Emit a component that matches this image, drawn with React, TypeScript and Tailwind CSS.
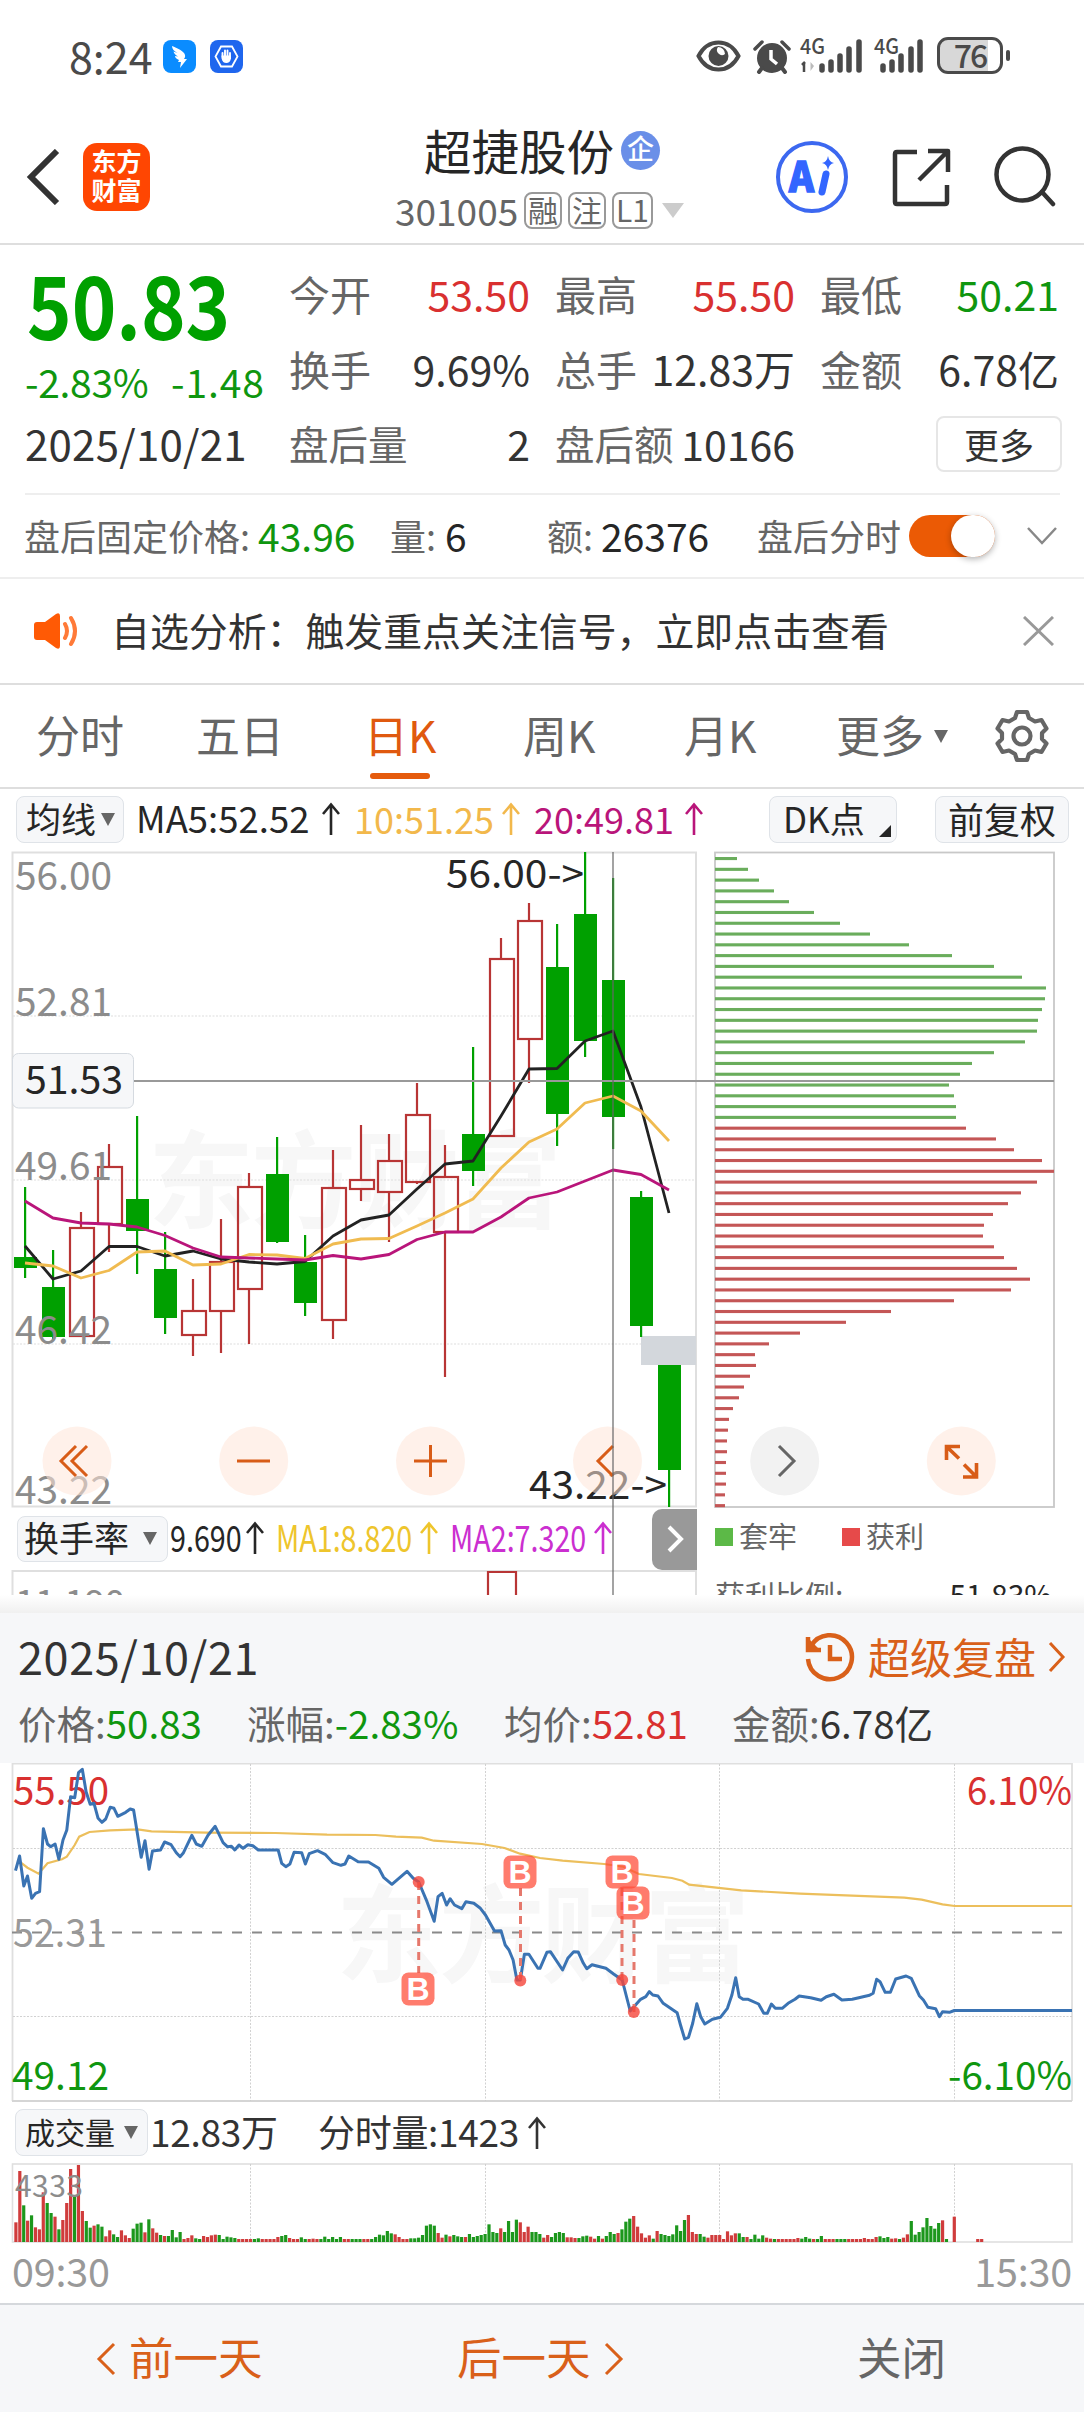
import { FC, ReactNode } from "react";

type Candle = [high: number, top: number, bottom: number, low: number, up: boolean];

// y values of every candle, left to right
const candles: Candle[] = [
  [1187, 1257, 1268, 1278, false],
  [1250, 1287, 1337, 1339, false],
  [1212, 1228, 1336, 1336, true],
  [1144, 1167, 1224, 1252, true],
  [1116, 1199, 1231, 1274, false],
  [1232, 1269, 1318, 1334, false],
  [1279, 1311, 1335, 1356, true],
  [1219, 1262, 1311, 1353, true],
  [1173, 1187, 1289, 1344, true],
  [1137, 1174, 1242, 1243, false],
  [1235, 1262, 1303, 1316, false],
  [1150, 1188, 1320, 1339, true],
  [1125, 1180, 1189, 1201, true],
  [1134, 1161, 1192, 1242, true],
  [1083, 1115, 1182, 1184, true],
  [1145, 1177, 1232, 1377, true],
  [1047, 1134, 1171, 1186, false],
  [938, 959, 1136, 1136, true],
  [903, 921, 1039, 1083, true],
  [924, 967, 1114, 1146, false],
  [852, 914, 1041, 1057, false],
  [878, 980, 1117, 1149, false],
  [1191, 1197, 1326, 1337, false],
  [1365, 1365, 1470, 1507, false],
];

const ma5 = [1246, 1279, 1271, 1246.5, 1246.5, 1256, 1251, 1259, 1262, 1264, 1261.5, 1236, 1220, 1215, 1189, 1164, 1161, 1116, 1069, 1068.5, 1041, 1031, 1107, 1213];
const ma10 = [1263, 1266, 1278, 1270.5, 1252, 1251, 1265, 1264, 1254.5, 1255, 1258.5, 1244, 1239, 1238.5, 1226, 1213, 1199, 1168, 1142, 1129, 1103, 1096, 1111, 1141];
const ma20 = [1201, 1218, 1223, 1224, 1227, 1235.5, 1248, 1257, 1258, 1259, 1260, 1255.5, 1259, 1254.5, 1239.5, 1232, 1232, 1217, 1198, 1192, 1181, 1170, 1174.5, 1190];

// chip distribution, bar lengths
const trapped = [22, 33, 44, 59, 74, 99, 125, 155, 194, 237, 279, 307, 331, 330, 327, 323, 322, 310, 279, 257, 245, 234, 239, 241, 241];
const profit = [
  251, 281, 299, 327, 339, 322, 306, 293, 278, 269, 268, 279, 289, 302, 315, 296, 239, 176, 131, 85, 54, 40, 41, 35, 29, 24, 18, 14, 13, 12, 12, 11,
  11, 11, 10, 10,
];

const priceLine =
  "15.5,1870.7 19.6,1856 23.8,1886 27.5,1876 31.7,1898.3 35.5,1893.3 39.6,1891.7 43.4,1828.7 47.5,1844 50.6,1846.7 55.1,1844 58.9,1859.3 63,1840 66.8,1830 70.6,1796.7 74.7,1797.7 78.5,1772.7 82.3,1769.3 86.1,1791.7 90.2,1804.3 94,1803.3 98.1,1818.3 101.9,1822.3 105.7,1819 110.2,1807.3 114,1808.3 117.8,1816.3 125.7,1812.3 130.2,1809 133.6,1810 141.2,1857.3 145,1840.7 149.1,1869.3 152.5,1851 160.5,1850 164.6,1842 171.1,1844.7 176.3,1852.7 180.1,1856.7 183.5,1852.7 191.8,1835.3 196.3,1844 201.8,1846.3 208,1835.3 215.2,1826.3 223.1,1842.7 227.3,1846.7 231.4,1846.3 234.8,1850 239,1845 243.1,1848.3 247.9,1844.7 252.8,1845.7 258.3,1850 278.2,1850 281.7,1863.3 285.8,1866.7 289.9,1864 294.1,1852.3 301.7,1852.7 305.4,1864 309.2,1853.7 317.5,1850.7 325.1,1854.3 333,1862.7 340.9,1865.3 345,1864 348.8,1856 358.1,1861.7 368.5,1862 378.8,1868.3 383.6,1877.3 391.9,1884.3 407,1871.3 413.2,1878.3 418.7,1882 427,1901.7 434.2,1921.3 438,1896.7 442.1,1893.3 446.6,1905 450.1,1898.7 454.5,1905 461.8,1908.7 465.9,1901.7 473.8,1903.3 480.4,1908.3 485.5,1915 494.5,1931 501,1930.7 505.2,1945 509,1950 513.1,1960 516.9,1980 520.3,1980 524.4,1954.3 528.9,1954.3 537.9,1968.3 540,1968.3 546.9,1952.3 550.4,1951.7 562.6,1970 567.8,1958.3 573.7,1951.7 578.2,1952 583.4,1963.3 586.8,1968.7 592,1964.7 605.9,1968.3 613.6,1974 622.2,1980 630.2,2011 640.6,1999.3 645.8,1996.7 649.3,1991.7 652.8,1995 658,1996 663.2,2003.3 677.1,2012.7 680.5,2025 684.7,2039 688.5,2037.3 692.7,2023.3 696.8,2003.7 700.7,2016.7 704.8,2024 712.4,2019.3 720.4,2017.3 727.4,2008.3 731.9,1995 735.7,1977.7 739.2,1996.7 743,1999.3 748.2,1999.3 758.6,2004 763.8,2013.3 767.3,2013.3 771.4,2004 775.3,2008.3 782.2,2008.3 788.1,2003.3 795,1999.3 799.2,1996 810.6,1997.7 821.1,2000.3 826.3,1996.7 833.9,1994.3 841.9,2000 852.3,1999.3 869.6,1995.3 873.1,1993.3 876.6,1979.3 880,1981.7 885.2,1992.3 890.4,1992.3 895.7,1979 906.1,1976 911.3,1978.3 919.3,1995.7 923.4,2000 927.9,2007.3 935.6,2008.7 939.4,2016.7 942.5,2011.7 949.4,2012.3 954.3,2010.5 1072,2010.5";

const averageLine =
  "19.6,1861.7 27.5,1867.7 38.6,1873.7 47.5,1863.3 62,1859.3 66.8,1856.7 74.7,1845 79.2,1836.7 89.5,1832 110,1830.3 137.7,1829.3 151.5,1831.3 206.6,1832.7 275.5,1833 327,1834.7 375.3,1835 396,1836.7 421.8,1837.7 433.9,1840.7 482,1844 504.5,1848 520,1853.7 540,1858 562.6,1860.7 604.2,1864 623.3,1866.7 638.9,1874 671.9,1878 682.3,1880.7 689.2,1884.7 741.2,1890.3 800,1893.7 904.3,1897.7 921.7,1899.7 942.5,1904.3 954.7,1906 1072,1906";

// volume per minute, negative = sell side
const volumes = [
  59, 213, -110, 64, -80, 44, 38, 149, -117, -87, 76, -38, 66, 117, 219, -136, 231, 93, -63, -43, 49, -53, -46, 17, 35, -23, -15, 35, 20, 12, -40, -55,
  -58, 29, -68, 41, 28, -21, 18, -18, -36, -14, -30, 9, 12, 20, -11, -9, 18, 15, 20, 22, -21, -9, -16, -14, -12, 9, 9, 9, 9, -9, -11, 9, 9, 9, 9, 15,
  -18, -21, 12, 9, 9, -14, -9, 9, 10, 9, -9, -16, -9, -15, -9, -15, 9, 9, -9, -9, -9, 9, 9, -9, -15, -22, -20, -33, -26, 23, 15, 9, 9, -11, -11, -13,
  -21, -49, -53, -49, 27, 13, -22, 17, -21, -17, -15, 15, -24, -15, -18, -21, -24, -53, -30, -27, 41, -30, -63, -30, -67, 59, 30, 46, -30, -30, -24,
  13, 21, -15, -27, -30, -27, 14, 14, 12, -12, -17, -19, 16, 10, -18, 10, -18, -30, -24, 27, -38, -61, -70, 78, 46, 26, 13, 20, -10, 33, -24, -21, -18,
  -23, -50, -33, -66, 81, 30, 24, -24, -16, 13, 21, 21, 21, 9, 32, 20, 26, -26, -15, 15, -9, -22, -10, -20, 13, 10, -9, 9, 9, 9, 9, 9, 12, -10, -15,
  -10, 9, -9, -18, 9, 9, 9, -9, -9, -9, 9, 9, 9, 9, 12, 9, 9, 15, -17, -12, -15, 10, 11, -9, 13, 23, -63, -22, -30, -44, -72, -48, -40, -57, 65, -9, 0,
  76, 0, 0, 0, 0, 0, 9, 9,
];

const RED = "#d93030";
const GREEN = "#0f960f";

const toPoints = (values: number[]) => values.map((y, i) => `${25 + i * 28},${y}`).join(" ");

const UpArrow: FC<{ className?: string }> = ({ className }) => (
  <svg className={className} width="20" height="34" viewBox="0 0 20 34" fill="none" stroke="currentColor" strokeWidth="2.6">
    <path d="M10 33V3M2 12l8-9.500 8 9.500" />
  </svg>
);

const Caret: FC<{ className?: string }> = ({ className }) => (
  <svg className={className} width="14" height="13" viewBox="0 0 14 13" fill="currentColor">
    <path d="M0 0h14L7 13z" />
  </svg>
);

// condensed indicator text
const Narrow: FC<{ text: string; className: string }> = ({ text, className }) => (
  <span className={`block overflow-visible whitespace-nowrap pb-[5px] ${className}`}>
    <span className="inline-block origin-left scale-x-[0.775]">{text}</span>
  </span>
);

const StatusBar = () => (
  <div className="h-[112px] pt-[37px] pl-[69px] flex items-start text-[#4a4a4a]">
    <div className="text-[43px] leading-[36px] w-[94px]">8:24</div>
    <svg className="mt-[3px]" width="33" height="33" viewBox="0 0 33 33">
      <rect width="33" height="33" rx="8" fill="#0a8cff" />
      <path d="M9 6c5 2 12 5 13 9 .5 2-.5 3-1 4h3l-7 9 1-6h-3l1-2c-3-1-4-3-4-4l3 .5c-3-2-4-3-4.500-5l4 1.500C11 11 9 9 9 6z" fill="#fff" />
    </svg>
    <svg className="mt-[3px] ml-[14px]" width="33" height="33" viewBox="0 0 33 33">
      <rect width="33" height="33" rx="8" fill="#1f66ee" />
      <path d="M11 6.500h11l5.500 10L22 26.500H11L5.500 16.500z" fill="none" stroke="#fff" strokeWidth="1.800" />
      <path d="M12.500 17v-4M15 16v-5.500M17.500 16v-5.500M20 17v-4" stroke="#fff" strokeWidth="1.900" strokeLinecap="round" />
      <path d="M11.600 15.500h9.400v3q-1 4.500-4.700 4.500t-4.700-4.500z" fill="#fff" />
    </svg>
    <svg className="ml-[453px] mt-[2px]" width="45" height="34" viewBox="0 0 45 34">
      <path d="M2.500 17C12-1 33-1 42.500 17 33 35 12 35 2.500 17z" fill="none" stroke="currentColor" strokeWidth="4" />
      <circle cx="22.500" cy="17" r="10" fill="currentColor" />
      <path d="M22 8a5 5 0 0 0 7 7a7 7 0 0 0-7-7z" fill="#fff" />
    </svg>
    <svg className="ml-[12px] mt-[3px]" width="38" height="34" viewBox="0 0 38 34">
      <circle cx="19" cy="18" r="15" fill="currentColor" />
      <path d="M2 9l7-7M36 9l-7-7" stroke="currentColor" strokeWidth="3.500" strokeLinecap="round" />
      <path d="M9 28l-3 4M29 28l3 4" stroke="currentColor" strokeWidth="4" strokeLinecap="round" />
      <path d="M18 10v9l6 5" stroke="#fff" strokeWidth="3.500" fill="none" />
    </svg>
    <svg className="ml-[9px] overflow-visible" width="66" height="37" viewBox="0 0 66 37">
      <text x="0" y="17" fontSize="21" fontWeight="500" fill="currentColor" textLength="25" lengthAdjust="spacingAndGlyphs">4G</text>
      <path d="M4 25v10M2 28l3-3" stroke="currentColor" strokeWidth="2.500" />
      <path d="M10.500 25v9l3.500-5z" fill="#bbb" />
      <g stroke="currentColor" strokeWidth="5.500" strokeLinecap="round">
        <path d="M22 29v4M31 25v8M40 19v14M49 12v21M59 5v28" />
      </g>
    </svg>
    <svg className="ml-[8px] overflow-visible" width="54" height="37" viewBox="0 0 54 37">
      <text x="0" y="17" fontSize="21" fontWeight="500" fill="currentColor" textLength="25" lengthAdjust="spacingAndGlyphs">4G</text>
      <g stroke="currentColor" strokeWidth="5.500" strokeLinecap="round">
        <path d="M9 29v4M18 25v8M27 19v14M37 12v21M46 5v28" />
      </g>
    </svg>
    <div className="ml-[9px] w-[66px] h-[37px] rounded-[11px] border-[3px] border-[#4a4a4a] bg-[linear-gradient(90deg,#d8d8d8_80%,#fff_80%)] text-[32px] leading-[28px] text-center font-medium tracking-[-2px]">76</div>
    <div className="ml-[3px] mt-[13px] w-[4px] h-[11px] rounded-full bg-[#4a4a4a]" />
  </div>
);

const Tag: FC<{ children: ReactNode }> = ({ children }) => (
  <span className="h-[37px] min-w-[37px] px-[2px] rounded-[8px] border-2 border-[#999] text-[30px] leading-[31px] text-center text-[#666]">{children}</span>
);

const Header = () => (
  <div className="h-[133px] border-b-2 border-[#dedede] flex pl-[26px]">
    <svg className="mt-[37px]" width="34" height="56" viewBox="0 0 34 56" fill="none" stroke="#333" strokeWidth="6">
      <path d="M31 2L5 28l26 26" />
    </svg>
    <div className="mt-[31px] ml-[23px] w-[67px] h-[68px] rounded-[14px] bg-[#ff4602] text-white text-[25px] leading-[29px] font-bold text-center pt-[3px]">
      <div>东方</div>
      <div>财富</div>
    </div>
    <div className="ml-[244px] w-[301px] pt-[10px]">
      <div className="flex items-center pl-[30px]">
        <h1 className="text-[47.500px] leading-[56px] text-[#262626]">超捷股份</h1>
        <span className="ml-[7px] w-[39px] h-[39px] rounded-full bg-[#6a8fe8] text-white text-[27px] leading-[34px] font-medium text-center">企</span>
      </div>
      <div className="flex items-center mt-[12px] text-[37px] leading-[36px] text-[#666]">
        <span className="w-[130px] pl-[1px]">301005</span>
        <span className="flex gap-[6px] pt-[2px]">
          <Tag>融</Tag>
          <Tag>注</Tag>
          <Tag>L1</Tag>
        </span>
        <svg className="ml-[9px] mt-[2px]" width="22" height="15" viewBox="0 0 22 15"><path d="M0 0h22L11 15z" fill="#ccc" /></svg>
      </div>
    </div>
    <svg className="mt-[28px] ml-[80px]" width="74" height="74" viewBox="0 0 74 74">
      <circle cx="37" cy="37" r="34" fill="none" stroke="#3c68f0" strokeWidth="4" />
      <text x="14" y="52" fontSize="42" fontWeight="900" fill="#3366ff" stroke="#3366ff" strokeWidth="1.500" textLength="25" lengthAdjust="spacingAndGlyphs">A</text>
      <path d="M51 34l-4 18" stroke="#3366ff" strokeWidth="7" strokeLinecap="round" />
      <path d="M53 16q1 6 6 7-5 1-6 7-1-6-6-7 5-1 6-7z" fill="#3366ff" />
    </svg>
    <svg className="mt-[36px] ml-[43px]" width="60" height="60" viewBox="0 0 60 60" fill="none" stroke="#333" strokeWidth="4.500" strokeLinejoin="round">
      <path d="M25 4H5q-2 0-2 2v48q0 2 2 2h48q2 0 2-2V37" />
      <path d="M36 3h20v21M55 4L27 32" />
    </svg>
    <svg className="mt-[34px] ml-[42px]" width="62" height="62" viewBox="0 0 62 62" fill="none" stroke="#333" strokeWidth="4.500" strokeLinecap="round">
      <circle cx="28.500" cy="28.500" r="26" />
      <path d="M48 46l11 12" />
    </svg>
  </div>
);

const Stat: FC<{ label: string; value: string; tone?: string }> = ({ label, value, tone = "text-[#333]" }) => (
  <div className="flex justify-between whitespace-nowrap">
    <span className="text-[#666]">{label}</span>
    <span className={tone}>{value}</span>
  </div>
);

const Quote = () => (
  <div className="relative h-[334px] pl-[25px] border-b-2 border-[#eee]">
    <div className="flex h-[248px] pt-[12px]">
      <div className="w-[264px] shrink-0">
        <div className="text-[87px] leading-[88px] mt-[1px] pl-[2px] font-bold text-[#00a000]"><span className="inline-block origin-left scale-x-[0.87]">50.83</span></div>
        <div className="flex text-[39px] leading-[48px] mt-[11px] text-[#0f960f]">
          <span className="w-[146px] tracking-[-0.3px]">-2.83%</span>
          <span className="tracking-[0.9px]">-1.48</span>
        </div>
        <div className="text-[42px] leading-[50px] mt-[13px] text-[#333] tracking-[0.25px]">2025/10/21</div>
      </div>
      <div className="grid grid-cols-[241px_240px_239px] gap-x-[25px] auto-rows-[75px] leading-[72px] text-[41px]">
        <Stat label="今开" value="53.50" tone="text-[#d93030]" />
        <Stat label="最高" value="55.50" tone="text-[#d93030]" />
        <Stat label="最低" value="50.21" tone="text-[#0f960f]" />
        <Stat label="换手" value="9.69%" />
        <Stat label="总手" value="12.83万" />
        <Stat label="金额" value="6.78亿" />
        <div className="flex justify-between">
          <span className="text-[39.500px] text-[#666]">盘后量</span>
          <span className="text-[#333]">2</span>
        </div>
        <div className="flex justify-between">
          <span className="text-[39.500px] text-[#666]">盘后额</span>
          <span className="text-[#333]">10166</span>
        </div>
        <button className="mt-[9px] -mr-[3px] ml-auto w-[126px] h-[56px] rounded-[8px] border-2 border-[#e6e6e6] text-[35px] leading-[46px] text-[#333]">更多</button>
      </div>
    </div>
    <div className="mr-[24px] flex items-center h-[84px] border-t-2 border-[#eee] text-[36px] text-[#666] whitespace-nowrap">
      <span className="w-[234px] -ml-[1px] pb-[2px]">盘后固定价格:</span>
      <span className="w-[132px] text-[39px] pb-[2px] text-[#0f960f]">43.96</span>
      <span className="w-[55px] pb-[2px]">量:</span>
      <span className="w-[102px] text-[39px] pb-[2px] text-[#262626]">6</span>
      <span className="w-[54px] pb-[2px]">额:</span>
      <span className="w-[156px] text-[39px] pb-[2px] text-[#262626]">26376</span>
      <span className="w-[152px] pb-[2px]">盘后分时</span>
      <span className="w-[86px] h-[42px] rounded-full bg-[#eb5a05] flex justify-end">
        <span className="w-[44px] h-[42px] rounded-full bg-white shadow-[0_2px_6px_rgba(0,0,0,0.3)]" />
      </span>
      <svg className="ml-[32px]" width="30" height="18" viewBox="0 0 30 18" fill="none" stroke="#888" strokeWidth="2.500"><path d="M1 1l14 15L29 1" /></svg>
    </div>
  </div>
);

const Notice = () => (
  <div className="flex items-center h-[106px] border-b-2 border-[#dedede] pl-[33px] text-[38.900px] text-[#333]">
    <svg width="46" height="36" viewBox="0 0 46 36" fill="#ff5a05">
      <path d="M4 9h8L23 1q4-2 4 2v30q0 4-4 2l-11-8H4q-3 0-3-3V12q0-3 3-3z" />
      <path d="M32 11q4 7 0 14M38 5q8 13 0 26" fill="none" stroke="#ff7a38" strokeWidth="4" strokeLinecap="round" />
    </svg>
    <span className="ml-[32px] w-[912px] pb-[4px]">自选分析：触发重点关注信号，立即点击查看</span>
    <svg width="31" height="30" viewBox="0 0 31 30" stroke="#999" strokeWidth="3"><path d="M1 1l29 28M30 1L1 29" /></svg>
  </div>
);

const tabs = [
  { name: "分时", width: "w-[160px]" },
  { name: "五日", width: "w-[168px]" },
  { name: "日K", width: "w-[159px]" },
  { name: "周K", width: "w-[161px]" },
  { name: "月K", width: "w-[152px]" },
  { name: "更多", width: "w-[98px]" },
];

const Tabs = () => (
  <div className="flex items-center h-[104px] border-b-2 border-[#dedede] pl-[36px] text-[44px] text-[#666]">
    {tabs.map((tab) => (
      <div key={tab.name} className={`relative h-full leading-[98px] whitespace-nowrap ${tab.width} ${tab.name === "日K" ? "text-[#e0590f]" : ""}`}>
        {tab.name}
        {tab.name === "日K" && <span className="absolute left-[6px] bottom-[8px] w-[60px] h-[6px] rounded-full bg-[#e55b0d]" />}
      </div>
    ))}
    <Caret />
    <svg className="ml-[47px]" width="54" height="54" viewBox="0 0 54 54" fill="none" stroke="#666" strokeWidth="4.200" strokeLinejoin="round">
      <path d="M22 3h10l2 6 6 3.500 6.500-1.500 5 8.500-4.500 4.500v6l4.500 4.500-5 8.500-6.500-1.500-6 3.500-2 6H22l-2-6-6-3.500L7.500 43l-5-8.500L7 30v-6l-4.500-4.500 5-8.500L14 12.500 20 9z" />
      <circle cx="27" cy="27" r="8.500" />
    </svg>
  </div>
);

const KToolbar = () => (
  <div className="flex items-center h-[62px] pl-[16px] pr-[15px] text-[37px] text-[#262626] whitespace-nowrap">
    <button className="w-[108px] h-[47px] flex items-center pl-[9px] pb-[3px] rounded-[8px] border border-[#dfe3e8] bg-[#f6f7f9] text-[35px]">
      均线<Caret className="ml-[5px] mt-[4px] text-[#666]" />
    </button>
    <span className="ml-[12px] w-[184px] pb-[2px] text-[36.500px]">MA5:52.52</span>
    <UpArrow className="ml-[1px]" />
    <span className="ml-[13px] w-[147px] pb-[2px] text-[36px]  text-[#f2b84b]">10:51.25</span>
    <UpArrow className="text-[#f2b84b]" />
    <span className="ml-[13px] w-[150px] pb-[2px] text-[36px] text-[#b9157a]">20:49.81</span>
    <UpArrow className="text-[#b9157a]" />
    <button className="relative ml-auto w-[128px] h-[47px] pb-[3px] rounded-[8px] border border-[#dfe3e8] bg-[#f6f7f9] text-[35px] leading-[40px] text-left pl-[13px]">
      DK点
      <svg className="absolute right-[5px] bottom-[5px]" width="12" height="12" viewBox="0 0 12 12"><path d="M12 0v12H0z" fill="#262626" /></svg>
    </button>
    <button className="ml-[38px] w-[134px] h-[47px] pb-[3px] rounded-[8px] border border-[#dfe3e8] bg-[#f6f7f9] text-[36px] leading-[40px]">前复权</button>
  </div>
);

const Watermark: FC<{ x: number; y: number }> = ({ x, y }) => (
  <text x={x} y={y} fontSize="106" fontWeight="700" fill="#f7f7f7" textLength="414">东方财富</text>
);

const AxisText: FC<{ x: number; y: number; w: number; fill: string; children: ReactNode }> = ({ x, y, w, fill, children }) => (
  <text x={x} y={y} fontSize="39" fill={fill} textLength={w} lengthAdjust="spacingAndGlyphs">{children}</text>
);

const KChart = () => (
  <svg className="block" width="1084" height="658" viewBox="0 850 1084 658">
    <rect x="12.500" y="852.500" width="683.500" height="654" fill="none" stroke="#dfdfdf" strokeWidth="2" />
    <Watermark x={148} y={1220} />
    <path d="M13 1016h683M13 1180h683M13 1344h683" stroke="#ddd" strokeDasharray="2 1.500" />
    <rect x="641" y="1336" width="55" height="29" fill="#d3d7dc" />
    {candles.map(([high, top, bottom, low, up], i) => {
      const x = 25 + i * 28;
      return up ? (
        <g key={i} stroke="#b83535" strokeWidth="2.200" fill="none">
          <path d={`M${x} ${high}V${top}M${x} ${bottom}V${low}`} />
          <rect x={x - 11} y={top} width="24" height={bottom - top} />
        </g>
      ) : (
        <g key={i} fill="#00a000">
          <rect x={x - 1} y={high} width="2.200" height={low - high} />
          <rect x={x - 11} y={top} width="23" height={bottom - top} />
        </g>
      );
    })}
    <g fill="none" strokeWidth="2.800" strokeLinejoin="round">
      <polyline points={toPoints(ma5)} stroke="#222" />
      <polyline points={toPoints(ma10)} stroke="#f0bb50" />
      <polyline points={toPoints(ma20)} stroke="#b9157a" />
    </g>
    <AxisText x={15} y={890} w={97} fill="#8c8c8c">56.00</AxisText>
    <AxisText x={15} y={1016} w={97} fill="#8c8c8c">52.81</AxisText>
    <AxisText x={15} y={1180} w={97} fill="#8c8c8c">49.61</AxisText>
    <AxisText x={15} y={1344} w={97} fill="#8c8c8c">46.42</AxisText>
    <AxisText x={15} y={1504} w={97} fill="#8c8c8c">43.22</AxisText>
    <AxisText x={446} y={888} w={138} fill="#262626">56.00-&gt;</AxisText>
    <AxisText x={529} y={1499} w={138} fill="#262626">43.22-&gt;</AxisText>

    {/* chip distribution */}
    <rect x="715" y="852.500" width="339" height="654.500" fill="none" stroke="#c8c8c8" strokeWidth="1.800" />
    {[...trapped, ...profit].map((w, i) => (
      <rect key={i} x="715" y={857 + i * 10.785} width={w} height="3.100" fill={i < trapped.length ? "#6aad5c" : "#c45656"} />
    ))}

    <path d="M13 1081H1054" stroke="#999" strokeWidth="1.800" />
    <rect x="12.500" y="1053.500" width="121" height="54.500" rx="6" fill="#f6f7f9" stroke="#d5dae0" />
    <AxisText x={25} y={1094} w={98} fill="#262626">51.53</AxisText>

    {/* floating controls */}
    <g fill="#ffe5d9" fillOpacity="0.550">
      <circle cx="77" cy="1461" r="34.500" />
      <circle cx="253.700" cy="1461" r="34.500" />
      <circle cx="430.500" cy="1461" r="34.500" />
      <circle cx="607.500" cy="1461" r="34.500" />
      <circle cx="961.300" cy="1461" r="34.500" />
    </g>
    <circle cx="784.700" cy="1461" r="34.500" fill="#f2f2f2" />
    <g fill="none" stroke="#d85c17" strokeWidth="3">
      <path d="M76 1446l-15 15 15 15M87 1446l-15 15 15 15" />
      <path d="M237 1461h33M414 1461h33M430.500 1445v32" />
      <path d="M613 1446l-15 15 15 15" />
      <path d="M960 1446.500h-13.500v13.500M947 1447l12 11.500M963 1477h13.500v-14M976 1476.500l-12-12" strokeWidth="3.600" />
    </g>
    <path d="M779 1446l15 15-15 15" fill="none" stroke="#666" strokeWidth="3" />
  </svg>
);

const Turnover = () => (
  <div className="flex h-[87px] overflow-hidden">
    <div className="w-[697px]">
      <div className="flex items-center h-[62px] pl-[17px] text-[37px] text-[#262626]">
        <button className="w-[151px] h-[46px] flex items-center pl-[6px] pb-[5px] rounded-[8px] border border-[#dfe3e8] bg-[#f6f7f9] text-[35px] whitespace-nowrap">
          换手率<Caret className="ml-[14px] mt-[4px] text-[#666]" />
        </button>
        <Narrow text="9.690" className="ml-[2px] w-[75px]" />
        <UpArrow className="mb-[3px]" />
        <Narrow text="MA1:8.820" className="ml-[11px] w-[143px] text-[#eec52c]" />
        <UpArrow className="mb-[3px] text-[#eec52c]" />
        <Narrow text="MA2:7.320" className="ml-[11px] w-[143px] text-[#cb2fd0]" />
        <UpArrow className="mb-[3px] text-[#cb2fd0]" />
        <div className="ml-auto w-[45px] h-[61px] rounded-l-[10px] bg-[#999] flex items-center justify-center">
          <svg width="18" height="28" viewBox="0 0 18 28" fill="none" stroke="#fff" strokeWidth="4"><path d="M3 2l12 12L3 26" /></svg>
        </div>
      </div>
      <svg className="block" width="697" height="25" viewBox="0 1570 697 25">
        <path d="M12.500 1595v-24H696v24" fill="none" stroke="#dfdfdf" strokeWidth="2" />
        <path d="M488 1595v-23h28v23" fill="none" stroke="#b83535" strokeWidth="2.200" />
        <text x="15" y="1616" fontSize="37" fill="#8c8c8c" textLength="110">11.190</text>
      </svg>
    </div>
    <div className="flex-1 pl-[18px] text-[29px] text-[#666]">
      <div className="flex items-center h-[58px]">
        <span className="w-[18px] h-[18px] bg-[#5cb947]" />
        <span className="ml-[6px] w-[103px] pb-[3px]">套牢</span>
        <span className="w-[18px] h-[18px] bg-[#e64a4a]" />
        <span className="ml-[6px] pb-[3px]">获利</span>
      </div>
      <div className="flex justify-between pr-[32px] pt-[6px] text-[30px] leading-[44px]">
        <span>获利比例:</span>
        <span className="text-[#262626]">51.83%</span>
      </div>
    </div>
  </div>
);

const ReviewHeader = () => (
  <div>
    <div className="h-[18px] bg-linear-to-b from-white to-[#f0f0f0]" />
    <div className="h-[150px] bg-[#f6f7f9] text-[#333]">
      <div className="flex items-center h-[88px] pl-[18px] pr-[18px]">
        <span className="text-[45px] tracking-[0.6px] pb-[4px]">2025/10/21</span>
        <svg className="ml-auto" width="50" height="50" viewBox="0 0 50 50" fill="none" stroke="#d9601a" strokeWidth="4.500">
          <path d="M6 14a22 22 0 1 1-3 13" />
          <path d="M3 5v13h13" />
          <path d="M5 8v10h10z" fill="#d9601a" stroke="none" />
          <path d="M25 13v14h12" />
        </svg>
        <span className="ml-[13px] text-[42px] pb-[3px] text-[#d9601a]">超级复盘</span>
        <svg className="ml-[12px]" width="18" height="32" viewBox="0 0 18 32" fill="none" stroke="#d9601a" strokeWidth="3"><path d="M2 2l13 14L2 30" /></svg>
      </div>
      <div className="flex items-center h-[42px] pl-[18px] text-[38.500px] text-[#666] whitespace-nowrap">
        <span className="w-[229px]">价格:<span className="text-[#0f960f]">50.83</span></span>
        <span className="w-[257px]">涨幅:<span className="text-[#0f960f]">-2.83%</span></span>
        <span className="w-[228px]">均价:<span className="text-[#d93030]">52.81</span></span>
        <span>金额:<span className="text-[#333]">6.78亿</span></span>
      </div>
    </div>
  </div>
);

const Signal: FC<{ x: number; y: number }> = ({ x, y }) => (
  <g>
    <rect x={x} y={y} width="33" height="33" rx="7" fill="#ff4a35" fillOpacity="0.720" />
    <text x={x + 16.5} y={y + 27.5} fontSize="32" fontWeight="700" fill="#fff" textAnchor="middle" fontFamily="Liberation Sans">B</text>
  </g>
);

const MinuteChart = () => (
  <svg className="block" width="1084" height="339" viewBox="0 1763 1084 339">
    <path d="M12.500 2101V1763.500H1072V2101" fill="none" stroke="#dfdfdf" strokeWidth="1.800" />
    <path d="M12 2101H1072" stroke="#d5d5d5" strokeWidth="2" />
    <Watermark x={336} y={1974} />
    <path d="M250.500 1764v337M485.500 1764v337M719.500 1764v337M954.500 1764v337M13 1848.500H1072M13 2016.500H1072" stroke="#ccc" strokeDasharray="2 1.500" strokeWidth="0.900" />
    <path d="M12 1932.500H1062" stroke="#8a8a8a" strokeWidth="1.800" strokeDasharray="10 10" />
    <AxisText x={13} y={1805} w={96} fill={RED}>55.50</AxisText>
    <AxisText x={13} y={1947} w={94} fill="#999">52.31</AxisText>
    <AxisText x={12} y={2090} w={97} fill={GREEN}>49.12</AxisText>
    <AxisText x={967} y={1805} w={105} fill={RED}>6.10%</AxisText>
    <AxisText x={948} y={2090} w={124} fill={GREEN}>-6.10%</AxisText>
    <polyline points={averageLine} fill="none" stroke="#ecbf5c" strokeWidth="2.200" />
    <polyline points={priceLine} fill="none" stroke="#3a73b3" strokeWidth="3" strokeLinejoin="round" />
    <path d="M418.700 1882v91M520.500 1980v-92M622 1980v-92M634 2012v-93" stroke="#e5786c" strokeWidth="3" strokeDasharray="8 6" />
    <g fill="#f5453a" fillOpacity="0.800">
      <circle cx="418.700" cy="1882" r="6" />
      <circle cx="520.300" cy="1980.500" r="6" />
      <circle cx="622.200" cy="1980" r="6" />
      <circle cx="633.800" cy="2012" r="6" />
    </g>
    <Signal x={401.5} y={1972.5} />
    <Signal x={503.5} y={1855.5} />
    <Signal x={605.5} y={1855.5} />
    <Signal x={616.5} y={1886.5} />
  </svg>
);

const Volume = () => (
  <div className="h-[201px]">
    <div className="flex items-center h-[61px] pl-[15px] text-[37px] text-[#333] whitespace-nowrap">
      <button className="w-[133px] h-[47px] flex items-center pl-[9px] pb-[4px] rounded-[8px] border border-[#dfe3e8] bg-[#f6f7f9] text-[30px] text-[#262626]">
        成交量<Caret className="ml-[9px] mt-[4px] text-[#666]" />
      </button>
      <span className="ml-[2px] w-[168px] pb-[2px] tracking-[-0.3px]">12.83万</span>
      <span className="w-[205px] pb-[2px] tracking-[-0.3px]">分时量:1423</span>
      <UpArrow className="ml-[4px]" />
    </div>
    <svg className="block" width="1084" height="81" viewBox="0 2163 1084 81">
      <rect x="12.500" y="2164" width="1059.500" height="78" fill="none" stroke="#dfdfdf" strokeWidth="1.600" />
      <path d="M250.500 2164v78M485.500 2164v78M719.500 2164v78M954.500 2164v78" stroke="#ccc" strokeDasharray="2 1.500" strokeWidth="0.900" />
      {volumes.map((v, i) => (
        <rect key={i} x={14.3 + i * 3.91} y={2242 - Math.abs(v) / 3} width="3.200" height={Math.abs(v) / 3} fill={v > 0 ? "#d03c3c" : "#1c971c"} />
      ))}
      <text x="15" y="2197" fontSize="30" fill="#8c8c8c" textLength="68">4333</text>
    </svg>
    <div className="flex justify-between pl-[12px] pr-[12px] text-[39.500px] leading-[52px] text-[#999] tracking-[-0.200px]">
      <span>09:30</span>
      <span>15:30</span>
    </div>
  </div>
);

const Footer = () => (
  <div className="flex items-center h-[109px] border-t-2 border-[#d5d8dc] bg-[#f6f7f9] pl-[96px] text-[44.500px] text-[#d9601a]">
    <svg width="20" height="34" viewBox="0 0 20 34" fill="none" stroke="currentColor" strokeWidth="3"><path d="M18 2L3 17l15 15" /></svg>
    <span className="ml-[13px] w-[328px] pb-[5px]">前一天</span>
    <span className="w-[147px] pb-[5px]">后一天</span>
    <svg width="20" height="34" viewBox="0 0 20 34" fill="none" stroke="currentColor" strokeWidth="3"><path d="M2 2l15 15L2 32" /></svg>
    <span className="ml-[233px] pb-[5px] text-[#666]">关闭</span>
  </div>
);

const App = () => {
  return (
    <div className="w-[1084px] h-[2412px] overflow-hidden bg-white leading-none font-['Noto_Sans_CJK_SC',sans-serif]">
      <StatusBar />
      <Header />
      <Quote />
      <Notice />
      <Tabs />
      <div className="relative -mt-[1px]">
        <KToolbar />
        <KChart />
        <Turnover />
        {/* crosshair runs through both panes */}
        <div className="absolute left-[612px] top-[64px] bottom-0 w-[2px] bg-[#666]/60" />
      </div>
      <ReviewHeader />
      <MinuteChart />
      <Volume />
      <Footer />
    </div>
  );
};

export default App;
